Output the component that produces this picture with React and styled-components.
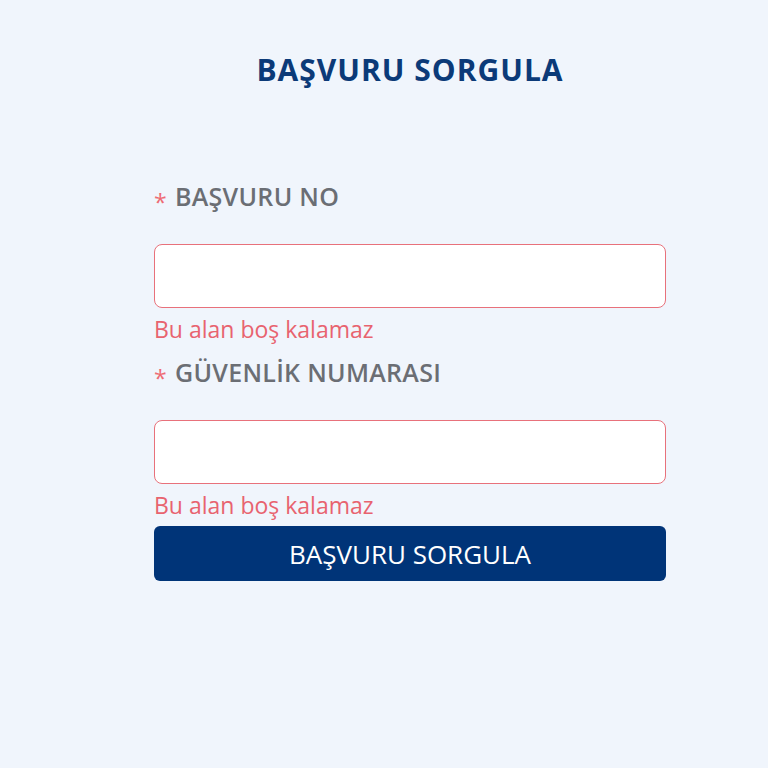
import React from 'react'
import styled, { createGlobalStyle } from 'styled-components'

const GlobalStyle = createGlobalStyle`
  html, body {
    margin: 0;
    padding: 0;
    background: #f0f5fc;
    font-family: "Open Sans", Lato, "Liberation Sans", sans-serif;
  }
`

const Page = styled.div`
  width: 768px;
  min-height: 768px;
  box-sizing: border-box;
  padding: 50px 102px 0 154px;
`

const Title = styled.h1`
  margin: 0;
  text-align: center;
  font-size: 30px;
  line-height: 40px;
  font-weight: 700;
  letter-spacing: 1px;
  color: #0b3a78;
`

const Form = styled.form`
  display: flex;
  flex-direction: column;
  margin-top: 91px;
`

const Label = styled.label`
  display: flex;
  align-items: center;
  gap: 8px;
  height: 30px;
  font-size: 25px;
  font-weight: 600;
  letter-spacing: 0.3px;
  color: #6b6e74;
  margin-top: ${p => (p.$first ? '0' : '13px')};
`

const Star = styled.span`
  color: #ee6b74;
  font-size: 23px;
  font-weight: 400;
  margin-top: 12px;
`

const Input = styled.input`
  box-sizing: border-box;
  width: 100%;
  height: 64px;
  margin-top: 33px;
  border: 1px solid #e8717b;
  border-radius: 8px;
  background: #fff;
  outline: none;
  font-size: 20px;
  padding: 0 14px;
`

const Error = styled.div`
  height: 30px;
  line-height: 30px;
  margin-top: 6px;
  font-size: 23px;
  color: #e8636f;
`

const Button = styled.button`
  height: 55px;
  margin-top: 6px;
  border: none;
  border-radius: 6px;
  background: #003478;
  color: #fff;
  font-family: inherit;
  font-size: 26px;
  font-weight: 400;
  cursor: pointer;
`

const Field = ({ label, first }) => (
  <>
    <Label $first={first}>
      <Star>*</Star>
      {label}
    </Label>
    <Input type="text" />
    <Error>Bu alan boş kalamaz</Error>
  </>
)

export default function App() {
  return (
    <>
      <GlobalStyle />
      <Page>
        <Title>BAŞVURU SORGULA</Title>
        <Form onSubmit={e => e.preventDefault()}>
          <Field label="BAŞVURU NO" first />
          <Field label="GÜVENLİK NUMARASI" />
          <Button type="submit">BAŞVURU SORGULA</Button>
        </Form>
      </Page>
    </>
  )
}
